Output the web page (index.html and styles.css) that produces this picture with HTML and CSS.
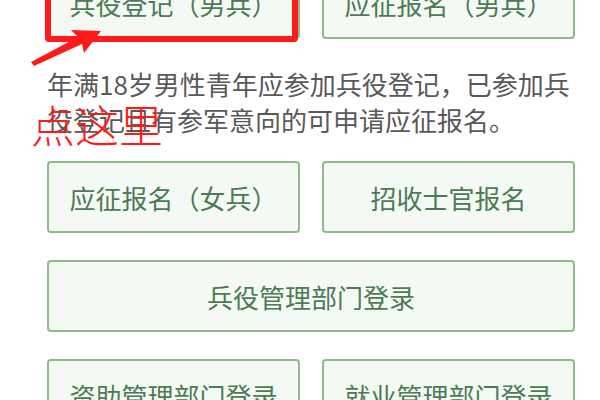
FILE: index.html
```html
<!DOCTYPE html>
<html lang="zh-CN">
<head>
<meta charset="utf-8">
<link rel="stylesheet" href="styles.css">
</head>
<body>
<div class="page">
  <div class="grid top">
    <div class="btn">兵役登记（男兵）</div>
    <div class="btn">应征报名（男兵）</div>
  </div>
  <p class="note">年满18岁男性青年应参加兵役登记，已参加兵役登记且有参军意向的可申请应征报名。</p>
  <div class="grid">
    <div class="btn">应征报名（女兵）</div>
    <div class="btn">招收士官报名</div>
    <div class="btn wide">兵役管理部门登录</div>
    <div class="btn">资助管理部门登录</div>
    <div class="btn">就业管理部门登录</div>
  </div>
</div>
<div class="mark-box"></div>
<svg class="mark-arrow" width="120" height="80" viewBox="0 0 120 80">
  <polygon points="31,62 78,37 71,30 101,31 84,53 82,44 34,66" fill="#ff1a1a"/>
</svg>
<div class="mark-text">点这里</div>
</body>
</html>
```
FILE: styles.css
```css
html, body {
  margin: 0;
  padding: 0;
  background: #ffffff;
  overflow: hidden;
  width: 600px;
  height: 400px;
}
body {
  position: relative;
  font-family: "Noto Sans CJK SC", "Noto Sans", sans-serif;
}
.page {
  padding-left: 47px;
  width: 528px;
}
.grid {
  display: grid;
  grid-template-columns: 253px 253px;
  column-gap: 22px;
  row-gap: 27px;
}
.grid.top {
  margin-top: -33px;
}
.btn {
  box-sizing: border-box;
  height: 72px;
  border: 2px solid #8fbb8b;
  border-radius: 4px;
  background: #f5f9f3;
  color: #4b7b56;
  font-size: 26px;
  display: flex;
  align-items: center;
  justify-content: center;
  white-space: nowrap;
}
.btn.wide {
  grid-column: 1 / span 2;
}
.note {
  margin: 27px 0 23px 0;
  font-size: 26px;
  line-height: 36px;
  color: #595959;
}
.mark-box {
  position: absolute;
  left: 45px;
  top: -12px;
  width: 253px;
  height: 54px;
  box-sizing: border-box;
  border: 6px solid #ff1a1a;
  border-radius: 4px;
}
.mark-arrow {
  position: absolute;
  left: 0;
  top: 0;
}
.mark-text {
  position: absolute;
  left: 31px;
  top: 102px;
  font-size: 44px;
  line-height: 44px;
  font-weight: 300;
  color: #ff1a1a;
  white-space: nowrap;
}
```
